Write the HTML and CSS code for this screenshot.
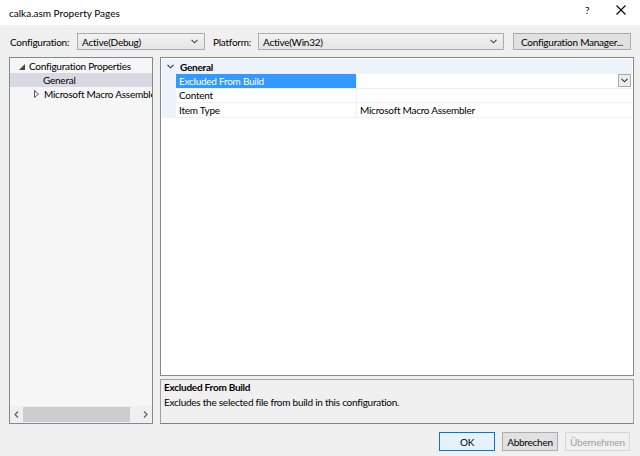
FILE: index.html
```html
<!DOCTYPE html>
<html>
<head>
<meta charset="utf-8">
<link rel="stylesheet" href="styles.css">
</head>
<body>
<div class="dialog">
  <div class="titlebar">
    <span class="title">calka.asm Property Pages</span>
    <span class="tb-help">?</span>
    <span class="tb-close"><svg width="10" height="10" viewBox="0 0 10 10"><path d="M0.5 0.5L9.5 9.5M9.5 0.5L0.5 9.5" stroke="#000" stroke-width="1.1" fill="none"/></svg></span>
  </div>
  <div class="configrow">
    <span class="lbl lbl-config">Configuration:</span>
    <div class="combo combo-config"><span>Active(Debug)</span><svg class="chev" width="7" height="5" viewBox="0 0 7 5"><path d="M0.5 0.8L3.5 3.8L6.5 0.8" stroke="#444" stroke-width="1.1" fill="none"/></svg></div>
    <span class="lbl lbl-platform">Platform:</span>
    <div class="combo combo-platform"><span>Active(Win32)</span><svg class="chev" width="7" height="5" viewBox="0 0 7 5"><path d="M0.5 0.8L3.5 3.8L6.5 0.8" stroke="#444" stroke-width="1.1" fill="none"/></svg></div>
    <div class="btn btn-cm">Configuration Manager...</div>
  </div>
  <div class="main">
    <div class="tree">
      <div class="tree-items">
        <div class="titem lvl0"><svg class="exp" width="6" height="6" viewBox="0 0 6 6"><path d="M6 0L6 6L0 6Z" fill="#444"/></svg><span>Configuration Properties</span></div>
        <div class="titem lvl1 sel"><span>General</span></div>
        <div class="titem lvl1b"><svg class="col" width="5" height="8" viewBox="0 0 5 8"><path d="M0.5 0.5L4.5 4L0.5 7.5Z" fill="none" stroke="#555" stroke-width="1"/></svg><span>Microsoft Macro Assembler</span></div>
      </div>
      <div class="hscroll">
        <span class="arr"><svg width="5" height="7" viewBox="0 0 5 7"><path d="M4 0.5L1 3.5L4 6.5" stroke="#606060" stroke-width="1.2" fill="none"/></svg></span>
        <div class="track"><div class="thumb"></div></div>
        <span class="arr"><svg width="5" height="7" viewBox="0 0 5 7"><path d="M1 0.5L4 3.5L1 6.5" stroke="#606060" stroke-width="1.2" fill="none"/></svg></span>
      </div>
    </div>
    <div class="right">
      <div class="grid">
        <div class="cat"><svg class="catchev" width="7" height="5" viewBox="0 0 7 5"><path d="M0.5 0.8L3.5 3.8L6.5 0.8" stroke="#333" stroke-width="1.1" fill="none"/></svg><span>General</span></div>
        <div class="prow">
          <div class="gut"></div>
          <div class="pname psel">Excluded From Build</div>
          <div class="pval pval-dd"><div class="ddbtn"><svg width="7" height="5" viewBox="0 0 7 5"><path d="M0.5 0.8L3.5 3.8L6.5 0.8" stroke="#333" stroke-width="1.1" fill="none"/></svg></div></div>
        </div>
        <div class="prow">
          <div class="gut"></div>
          <div class="pname">Content</div>
          <div class="pval"></div>
        </div>
        <div class="prow">
          <div class="gut"></div>
          <div class="pname">Item Type</div>
          <div class="pval">Microsoft Macro Assembler</div>
        </div>
      </div>
      <div class="desc">
        <div class="desc-title">Excluded From Build</div>
        <div class="desc-text">Excludes the selected file from build in this configuration.</div>
      </div>
    </div>
  </div>
  <div class="buttons">
    <div class="btn btn-ok">OK</div>
    <div class="btn btn-cancel">Abbrechen</div>
    <div class="btn btn-apply">Übernehmen</div>
  </div>
</div>
</body>
</html>
```

FILE: styles.css
```css
* { box-sizing: border-box; }
html, body { margin: 0; padding: 0; }
body {
  width: 640px;
  height: 456px;
  background: #f0f0f0;
  font-family: Lato, "Noto Sans", sans-serif;
  font-size: 10px;
  letter-spacing: -0.25px;
  color: #000;
  overflow: hidden;
}
.dialog { width: 640px; height: 456px; display: flex; flex-direction: column; }
.titlebar {
  height: 25px;
  background: #fff;
  display: flex;
  align-items: center;
  padding-left: 9px;
  position: relative;
  letter-spacing: 0;
}
.title { font-size: 10px; color: #000; }
.tb-help { position: absolute; left: 585px; top: 4px; font-size: 10px; }
.tb-close { position: absolute; left: 616px; top: 5px; display: flex; }
.configrow {
  display: flex;
  align-items: center;
  height: 17px;
  margin-top: 8px;
  padding-left: 10px;
  white-space: nowrap;
}
.lbl-config { width: 67px; }
.combo {
  height: 17px;
  border: 1px solid #acacac;
  background: linear-gradient(#f2f2f2, #e5e5e5);
  display: flex;
  align-items: center;
  justify-content: space-between;
  padding: 0 6px 0 4px;
}
.combo-config { width: 128px; }
.lbl-platform { margin-left: 8px; width: 45px; }
.combo-platform { width: 246px; }
.btn {
  height: 18px;
  border: 1px solid #adadad;
  background: #e1e1e1;
  display: flex;
  align-items: center;
  justify-content: center;
  white-space: nowrap;
}
.btn-cm { margin-left: 9px; width: 118px; height: 17px; }
.main {
  display: flex;
  margin-top: 7px;
  padding-left: 9px;
  height: 367px;
}
.tree {
  width: 144px;
  height: 367px;
  background: #f6f6f6;
  border: 1px solid #828790;
  display: flex;
  flex-direction: column;
  overflow: hidden;
}
.tree-items { flex: 1; padding-top: 1px; }
.titem {
  height: 14px;
  display: flex;
  align-items: center;
  white-space: nowrap;
  overflow: hidden;
}
.titem svg { flex-shrink: 0; }
.titem.lvl0 { padding-left: 9px; }
.titem.lvl0 .exp { margin-right: 4px; margin-top: 1px; }
.titem.lvl1 { padding-left: 33px; }
.titem.sel { background: #d9d9e3; }
.titem.lvl1b { padding-left: 24px; }
.titem.lvl1b .col { margin-right: 5px; }
.hscroll {
  height: 17px;
  display: flex;
  align-items: center;
  background: #f0f0f0;
}
.arr { width: 13px; display: flex; justify-content: center; align-items: center; }
.track { flex: 1; height: 15px; display: flex; align-items: center; }
.thumb { width: 107px; height: 15px; background: #cdcdcd; }
.right {
  margin-left: 7px;
  width: 474px;
  display: flex;
  flex-direction: column;
}
.grid {
  height: 319px;
  background: #fff;
  border: 1px solid #828790;
  padding: 1px 1px 0 1px;
}
.cat {
  height: 15px;
  background: #edf3fb;
  display: flex;
  align-items: center;
  font-weight: bold;
  padding-left: 5px;
}
.catchev { margin-right: 6px; }
.prow {
  height: 14.5px;
  display: flex;
  border-bottom: 1px solid #f0f0f0;
}
.gut { width: 14px; background: #edf3fb; }
.pname {
  width: 181px;
  padding-left: 3px;
  display: flex;
  align-items: center;
  border-right: 1px solid #f0f0f0;
}
.pname.psel { background: #3399ff; color: #fff; }
.pval {
  flex: 1;
  display: flex;
  align-items: center;
  padding-left: 3px;
  padding-right: 1px;
}
.pval-dd { justify-content: flex-end; }
.ddbtn {
  width: 13px;
  height: 13px;
  border: 1px solid #acacac;
  background: #ececec;
  display: flex;
  align-items: center;
  justify-content: center;
}
.desc {
  margin-top: 3px;
  height: 45px;
  border: 1px solid #a0a0a0;
  border-bottom-color: #828282;
  padding: 0 3px;
}
.desc-title { font-weight: bold; height: 15px; line-height: 15px; }
.desc-text { height: 15px; line-height: 15px; }
.buttons {
  display: flex;
  justify-content: flex-end;
  padding-right: 10px;
  margin-top: 8px;
  gap: 7px;
}
.buttons .btn { width: 56px; height: 19px; }
.btn-ok { border-color: #0078d7; background: #e5f1fb; }
.buttons .btn-apply { background: #f0f0f0; border-color: #d6d6d6; color: #a0a0a0; width: 65px; }
```
